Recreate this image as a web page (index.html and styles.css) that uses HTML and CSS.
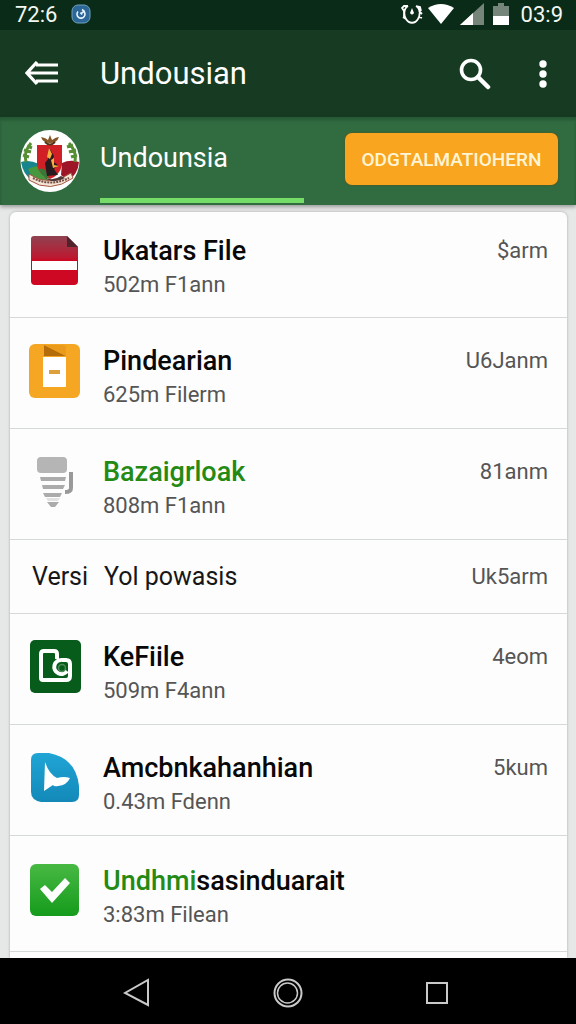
FILE: index.html
```html
<!DOCTYPE html>
<html lang="id">
<head>
<meta charset="utf-8">
<meta name="viewport" content="width=device-width, initial-scale=1">
<title>Undousian</title>
<link rel="stylesheet" href="styles.css">
</head>
<body>
<div class="status">
  <span>72:6</span>
  <svg class="status-app" width="20" height="20" viewBox="0 0 20 20" aria-hidden="true"><rect x="1" y="1" width="18" height="18" rx="6" fill="#2c6798" stroke="#6da2bd"/><path d="M7 7.5a4 4 0 1 0 5-.8M11 5.500l2 1.500-2 2M9.500 8.500l1.500 2" fill="none" stroke="#e8f6ff" stroke-width="1.600"/></svg>
  <div class="status-right">
    <svg width="22" height="22" viewBox="0 0 22 22" aria-hidden="true"><path d="M7 3C2 6 3 13 5 16c3 5 9 5 12 0 2-3 3-10-2-13M7 3L3 3 1 5l2 3M3 8v7M15 3l4 1 1 4M18 8l3 3M18 14l3 1M5 16l-3-2" fill="none" stroke="#fff" stroke-width="1.800"/><path d="M11 5l2 5q-2 3-4 0Z" fill="#fff"/></svg>
    <svg width="28" height="22" viewBox="0 0 28 22" aria-hidden="true"><path d="M1 5Q14-3 27 5L14 21Z" fill="#fff"/></svg>
    <svg width="26" height="23" viewBox="0 0 26 23" aria-hidden="true"><path d="M1 22L25 0v22Z" fill="#76857a"/><path d="M1 22L14 10v12Z" fill="#fff"/></svg>
    <svg class="battery" width="16" height="23" viewBox="0 0 16 23" aria-hidden="true"><path d="M0 3h5V0h6v3h5v11H0Z" fill="#76857a"/><path d="M0 13h16v9H0Z" fill="#fff"/></svg>
    <span>03:9</span>
  </div>
</div>

<header class="appbar">
  <button class="icon-button" type="button" aria-label="Back"><svg width="34" height="26" viewBox="0 0 34 26"><path d="M33 4H11M33 12H4M33 20H11M12 1L2 12l10 11" fill="none" stroke="#fff" stroke-width="3.200"/></svg></button>
  <h1 class="appbar-title">Undousian</h1>
  <button class="icon-button" type="button" aria-label="Search"><svg width="32" height="32" viewBox="0 0 32 32"><circle cx="12" cy="12" r="9.500" fill="none" stroke="#fff" stroke-width="3.600"/><path d="M19 19l10 10" stroke="#fff" stroke-width="4.500" stroke-linecap="round"/></svg></button>
  <button class="icon-button more" type="button" aria-label="More options"><svg width="8" height="28" viewBox="0 0 8 28"><g fill="#fff"><circle cx="4" cy="4" r="3.700"/><circle cx="4" cy="14" r="3.700"/><circle cx="4" cy="24" r="3.700"/></g></svg></button>
</header>

<div class="subbar">
  <svg class="crest" width="60" height="62" viewBox="0 0 60 62" role="img" aria-label="Crest">
    <ellipse cx="30" cy="31" rx="29.500" ry="31" fill="#fff"/>
    <path d="M1 32q8-3 18 2l4 14-10 3Q3 45 1 32Z" fill="#17858d"/>
    <path d="M8 39q10-5 16-2l4 13-13 2Z" fill="#45983e"/>
    <path d="M42 33q8-4 17-1-1 12-11 19l-7-6Z" fill="#9f1528"/>
    <path d="M17 15h25v20q-2 10-12 14-11-4-13-14Z" fill="#d01f25"/>
    <path d="M19 39q7-3 10 10-8-3-10-10Z" fill="#38783b"/>
    <path d="M29 18l5 8-2 5 6 4-4 4 4 6-11 1-2-13 3-4Z" fill="#281b20"/>
    <path d="M29 18l3 6-2 5-3-2ZM31 30l3-2v7l5 1-6 2Z" fill="#f6ad3d"/>
    <path d="M21 7q5 1 7 3l2-5 2 5q4-3 7-3-2 6-9 6T21 7Z" fill="#865527"/>
    <path d="M25 12q5 5 10 0" stroke="#563316" stroke-width="2" fill="none"/>
    <g fill="none" stroke="#578f35" stroke-width="3"><path d="M6 32Q3 23 11 13M3 25l6 2M4 20l7 2M7 16l5 2M55 32q2-10-6-19M57 25l-6 2M56 20l-7 2M53 15l-6 2"/></g>
    <path d="M9 44q20 14 42-1l2 5q-23 16-44 2Z" fill="#f6e5d7" stroke="#a45842"/>
    <path d="M13 48q17 9 36 0" fill="none" stroke="#734b43" stroke-width="2" stroke-dasharray="2 1"/>
    <path d="M24 47q8 5 17-1l4 2q-12 7-21-1Z" fill="#503a38"/>
  </svg>
  <a class="tab" href="#files">Undounsia</a>
  <button class="action" type="button">ODGTALMATIOHERN</button>
</div>

<main class="content">
<ul class="card" id="files">
  <li class="row first">
    <svg class="icon" width="52" height="54" viewBox="0 0 52 54" aria-hidden="true"><defs><linearGradient id="red" x2="0" y2="1"><stop stop-color="#8f4351"/><stop offset=".45" stop-color="#bd1830"/><stop offset=".5" stop-color="#ce0722"/></linearGradient></defs><path d="M5 2h33l11 11v34q0 4-4 4H6q-4 0-4-4V5q0-3 3-3Z" fill="url(#red)"/><path d="M38 2l11 11H38Z" fill="#50222c"/><path d="M3 27h45v9H3Z" fill="#fff"/></svg>
    <div><h2 class="title">Ukatars File</h2><p class="sub">502m F1ann</p></div><span class="value">$arm</span>
  </li>
  <li class="row">
    <svg class="icon" width="52" height="54" viewBox="0 0 52 54" aria-hidden="true"><rect width="51" height="54" rx="6" fill="#f5a623"/><path d="M15 1l22 11H15Z" fill="#b56d0c"/><path d="M15 1l22 11V5q0-4-3-4Z" fill="#eb9b1c"/><path d="M14 13h23v30H14Z" fill="#fff"/><path d="M20 26h11v4H20Z" fill="#dda03b"/></svg>
    <div><h2 class="title">Pindearian</h2><p class="sub">625m Filerm</p></div><span class="value">U6Janm</span>
  </li>
  <li class="row">
    <svg class="icon" width="52" height="54" viewBox="0 0 52 54" aria-hidden="true"><rect x="8" y="2" width="30" height="16" rx="4" fill="#b5b5b5"/><path d="M11 22h26l-1 4H12ZM13 30h23l-2 4H14ZM14 38h19l-2 4H16ZM18 47h12l-4 5h-4Z" fill="#ababab"/><path d="M17 43h14l-2 3H19Z" fill="#e2e2e2"/><path d="M42 17v16q0 4-6 4" fill="none" stroke="#999" stroke-width="4"/></svg>
    <div><h2 class="title green">Bazaigrloak</h2><p class="sub">808m F1ann</p></div><span class="value">81anm</span>
  </li>
  <li class="row version"><span class="label">Versi</span><span class="label">Yol powasis</span><span class="value">Uk5arm</span></li>
  <li class="row">
    <svg class="icon" width="52" height="54" viewBox="0 0 52 54" aria-hidden="true"><rect x="1" width="51" height="53" rx="5" fill="#075c1b"/><path d="M28 19v-5q0-3-3-3H15q-3 0-3 3v24q0 2 2 2h23q4 0 4-4V24q0-4-4-4h-4" fill="none" stroke="#fff" stroke-width="4"/><path d="M33 20a7 7 0 1 0 5 11" fill="none" stroke="#fff" stroke-width="4"/><circle cx="33" cy="28" r="3.500" fill="none" stroke="#4c8c58" stroke-width="1.500"/></svg>
    <div><h2 class="title">KeFiile</h2><p class="sub">509m F4ann</p></div><span class="value">4eom</span>
  </li>
  <li class="row">
    <svg class="icon" width="52" height="54" viewBox="0 0 52 54" aria-hidden="true"><defs><linearGradient id="blue" x2="0" y2="1"><stop stop-color="#20a5d5"/><stop offset="1" stop-color="#1389b9"/></linearGradient></defs><path d="M9 2h11Q47 7 50 35v9q0 7-7 7H12q-10-2-10-10V9q0-7 7-7Z" fill="url(#blue)"/><path d="M16 11q4 12 12 16 7-2 13 0-3 7-12 8-4 1-5-1l-9 6Z" fill="#fff"/></svg>
    <div><h2 class="title">Amcbnkahanhian</h2><p class="sub">0.43m Fdenn</p></div><span class="value">5kum</span>
  </li>
  <li class="row last">
    <svg class="icon" width="52" height="54" viewBox="0 0 52 54" aria-hidden="true"><defs><linearGradient id="green" x2="0" y2="1"><stop stop-color="#48b943"/><stop offset="1" stop-color="#159b1c"/></linearGradient></defs><rect x="1" y="0" width="49" height="52" rx="6" fill="url(#green)"/><path d="M11 25l5-4 7 7 13-14 5 5-18 20Z" fill="#fff"/></svg>
    <div><h2 class="title"><span class="green">Undhmi</span>sasinduarait</h2><p class="sub">3:83m Filean</p></div>
  </li>
</ul>
</main>

<nav class="navbar" aria-label="System">
  <button class="icon-button" type="button" aria-label="Back"><svg width="28" height="30" viewBox="0 0 28 30"><path d="M25 2v25L2 15Z" fill="none" stroke="#c9c9c9" stroke-width="2"/></svg></button>
  <button class="icon-button" type="button" aria-label="Home"><svg width="30" height="30" viewBox="0 0 30 30"><g fill="none" stroke="#c9c9c9"><circle cx="15" cy="15" r="13.500" stroke-width="2"/><circle cx="14.500" cy="15" r="10" stroke-width="1.500"/></g></svg></button>
  <button class="icon-button" type="button" aria-label="Recent apps"><svg width="24" height="24" viewBox="0 0 24 24"><path d="M2 2h20v20H2Z" fill="none" stroke="#c9c9c9" stroke-width="2"/></svg></button>
</nav>
</body>
</html>
```
FILE: styles.css
```css
* {
  box-sizing: border-box;
}

body {
  display: flex;
  flex-direction: column;
  min-height: 100vh;
  margin: 0;
  background: #e6e7e7;
  color: #080808;
  font-family: Roboto, "Liberation Sans", sans-serif;
}

h1,
h2,
p,
ul {
  margin: 0;
  padding: 0;
}

svg {
  display: block;
  flex: none;
}

button {
  border: 0;
  font-family: inherit;
}

.icon-button {
  display: flex;
  align-items: center;
  justify-content: center;
  padding: 0;
  background: none;
}

.status {
  display: flex;
  align-items: center;
  height: 30px;
  padding: 0 13px 2px 15px;
  background: #0a2b17;
  color: #f2f7f3;
  font-size: 22px;
}

.status-app {
  margin-left: 14px;
}

.status-right {
  display: flex;
  align-items: center;
  gap: 4px;
  margin-left: auto;
}

.battery {
  margin: 0 8px 0 4px;
}

.appbar {
  display: flex;
  align-items: center;
  height: 87px;
  padding: 0 29px 0 25px;
  background: #163b22;
  color: #fff;
}

.appbar-title {
  flex: 1;
  margin-left: 41px;
  font-size: 31px;
  font-weight: 400;
}

.more {
  margin-left: 48px;
}

.subbar {
  display: flex;
  align-items: center;
  height: 88px;
  padding: 0 18px 0 20px;
  background: #316b40;
  box-shadow: 0 2px 4px #0005, inset 0 3px 3px #163b2266;
}

.crest {
  margin-right: 20px;
}

.tab {
  display: flex;
  align-items: center;
  align-self: stretch;
  width: 204px;
  margin: 0 41px 2px 0;
  border-bottom: 5px solid #76dc68;
  color: #fff;
  font-size: 27px;
  text-decoration: none;
}

.action {
  flex: 1;
  height: 52px;
  margin-bottom: 4px;
  padding: 0;
  border-radius: 7px;
  background: #f9a51f;
  color: #fff5d5;
  font-size: 19px;
  font-weight: 500;
  box-shadow: 0 0 2px #694c12;
}

.content {
  display: flex;
  flex: 1;
  padding: 7px 9px 0 10px;
}

.card {
  flex: 1;
  border-radius: 6px 6px 0 0;
  background: #fdfdfd;
  list-style: none;
  box-shadow: 0 0 3px #0004;
}

.row {
  display: grid;
  grid-template-columns: 52px 1fr auto;
  column-gap: 22px;
  align-items: start;
  min-height: 111px;
  padding: 26px 19px 0;
  border-bottom: 1px solid #d6d9d9;
}

.first {
  min-height: 106px;
  padding-top: 22px;
}

.last {
  min-height: 116px;
  padding-top: 28px;
}

.version {
  grid-template-columns: 50px 1fr auto;
  align-items: center;
  min-height: 74px;
  padding: 0 19px 0 22px;
}

.title {
  font-size: 27px;
  font-weight: 500;
  line-height: 34px;
}

.green {
  color: #248a13;
}

.label {
  color: #171717;
  font-size: 25px;
  line-height: 34px;
  white-space: nowrap;
}

.sub {
  color: #555;
  font-size: 22px;
  line-height: 34px;
}

.value {
  color: #555;
  font-size: 22px;
  line-height: 34px;
}

.navbar {
  display: flex;
  align-items: center;
  justify-content: center;
  gap: 122px;
  height: 66px;
  padding: 4px 4px 0 0;
  background: #000;
}
```
